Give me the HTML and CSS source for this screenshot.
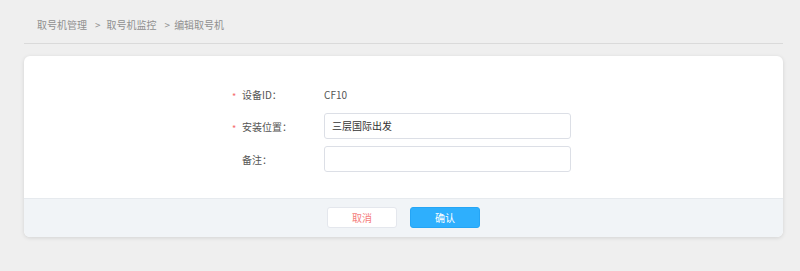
FILE: index.html
```html
<!DOCTYPE html>
<html lang="zh-CN">
<head>
<meta charset="utf-8">
<title>编辑取号机</title>
<link rel="stylesheet" href="styles.css">
</head>
<body>
<div class="breadcrumb">
  <span class="crumb">取号机管理</span><span class="sep">&gt;</span><span class="crumb">取号机监控</span><span class="sep sep2">&gt;</span><span class="crumb current">编辑取号机</span>
</div>
<div class="divider"></div>
<div class="card">
  <div class="card-body">
    <div class="row row-first">
      <div class="label"><span class="star">*</span><span class="label-text">设备ID：</span></div>
      <div class="value">CF10</div>
    </div>
    <div class="row">
      <div class="label"><span class="star">*</span><span class="label-text">安装位置：</span></div>
      <div class="input">三层国际出发</div>
    </div>
    <div class="row">
      <div class="label"><span class="star"></span><span class="label-text">备注：</span></div>
      <div class="input"></div>
    </div>
  </div>
  <div class="card-footer">
    <button class="btn btn-cancel">取消</button>
    <button class="btn btn-ok">确认</button>
  </div>
</div>
</body>
</html>
```
FILE: styles.css
```css
* { box-sizing: border-box; }
html, body { margin: 0; padding: 0; }
body {
  background: #efefef;
  font-family: "Noto Sans CJK SC", "Noto Sans", sans-serif;
  font-size: 10px;
  width: 800px;
  height: 271px;
  overflow: hidden;
}
.breadcrumb {
  height: 43px;
  padding: 15px 0 0 37px;
  line-height: 20px;
  color: #909090;
  font-size: 10px;
  display: flex;
}
.sep { margin: 0 6px 0 8px; }
.sep2 { margin: 0 4px 0 8px; }
.divider {
  height: 1px;
  background: #dadada;
  margin: 0 17px 0 24px;
}
.card {
  margin: 12px 17px 0 24px;
  background: #fff;
  border-radius: 6px;
  box-shadow: 0 1px 4px rgba(0,0,0,0.12);
  overflow: hidden;
}
.card-body {
  padding: 26px 0 26px 207px;
  display: flex;
  flex-direction: column;
  gap: 7px;
}
.row {
  display: flex;
  align-items: center;
  height: 26px;
}
.row-first { height: 24px; }
.label {
  width: 93px;
  display: flex;
  align-items: center;
  color: #555;
}
.star {
  width: 11px;
  color: #f56c6c;
  font-size: 9px;
  line-height: 10px;
  height: 10px;
  margin-top: 5px;
  padding-left: 1px;
}
.value { color: #555; }
.input {
  width: 247px;
  height: 26px;
  border: 1px solid #dcdfe6;
  border-radius: 3px;
  padding: 0 7px;
  line-height: 24px;
  color: #333;
}
.card-footer {
  background: #f1f4f7;
  border-top: 1px solid #e6eaee;
  height: 39px;
  display: flex;
  justify-content: center;
  align-items: center;
  gap: 13px;
  padding-bottom: 1px;
}
.btn {
  width: 70px;
  height: 21px;
  border-radius: 3px;
  font-family: inherit;
  font-size: 10px;
  padding: 0;
  line-height: 19px;
}
.btn-cancel {
  background: #fff;
  border: 1px solid #e4e7ed;
  color: #f47c7c;
}
.btn-ok {
  background: #2eaffd;
  border: 1px solid #25a5f5;
  color: #fff;
}
```
